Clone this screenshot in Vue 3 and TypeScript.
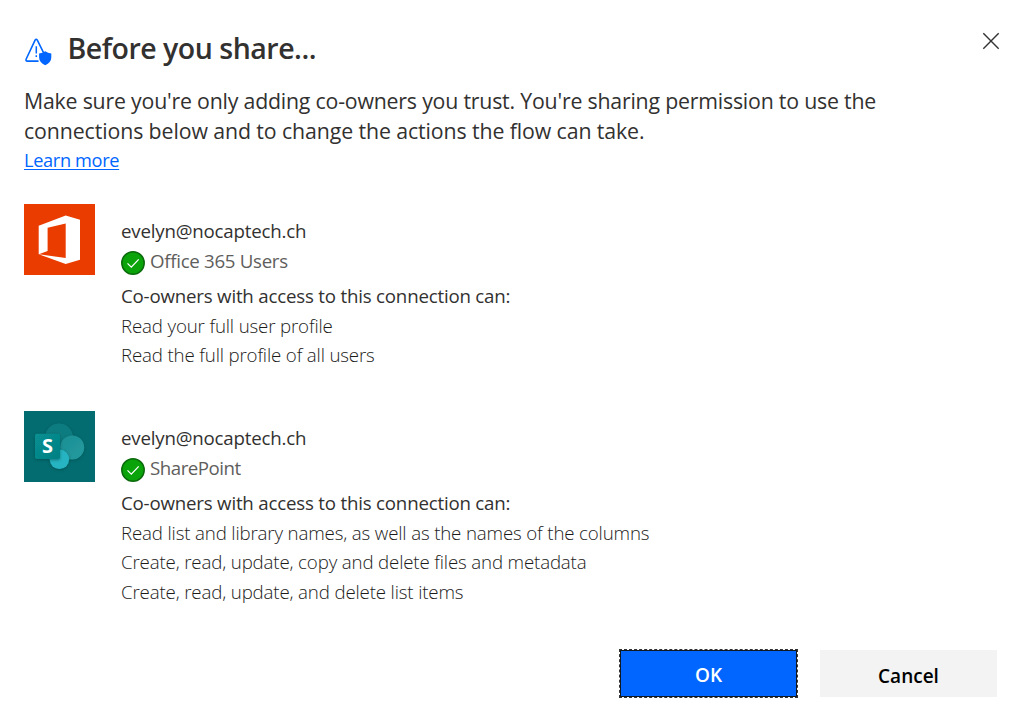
<script setup lang="ts">
interface Connection {
  id: 'office' | 'sharepoint'
  account: string
  name: string
  permissions: string[]
}

const connections: Connection[] = [
  {
    id: 'office',
    account: 'evelyn@nocaptech.ch',
    name: 'Office 365 Users',
    permissions: ['Read your full user profile', 'Read the full profile of all users'],
  },
  {
    id: 'sharepoint',
    account: 'evelyn@nocaptech.ch',
    name: 'SharePoint',
    permissions: [
      'Read list and library names, as well as the names of the columns',
      'Create, read, update, copy and delete files and metadata',
      'Create, read, update, and delete list items',
    ],
  },
]
</script>

<template>
  <div class="dialog" role="dialog" aria-label="Before you share...">
    <header class="head">
      <svg class="warn" width="28" height="30" viewBox="0 0 28 30">
        <path d="M2.2 23 11.2 4Q12.2 2.4 13.2 4L20 17.6M2.2 23Q1.4 25.1 3.4 25.1H14.5" fill="none" stroke="#0066ff" stroke-width="1.6" />
        <path d="M12.3 10.2v7.4M12.3 19.3v1.8" fill="none" stroke="#0066ff" stroke-width="1.5" />
        <path d="M21.2 15.2Q23.8 17.3 27.3 17.4V21.6Q27.2 26.6 21.2 29.2Q15.2 26.6 15.1 21.6V17.4Q18.6 17.3 21.2 15.2Z" fill="#0066ff" />
      </svg>
      <h1>Before you share...</h1>
      <button class="close" type="button" aria-label="Close">
        <svg width="18" height="18" viewBox="0 0 18 18"><path d="M1.3 1.3 16.7 16.7M16.7 1.3 1.3 16.7" stroke="#333" stroke-width="1.4" /></svg>
      </button>
    </header>

    <p class="intro">
      <span class="lead">Make sure you're only adding co-owners you trust. You're sharing permission to use the</span><br />
      <span>connections below and to change the actions the flow can take.</span>
    </p>
    <a class="learn">Learn more</a>

    <section v-for="c in connections" :key="c.id" class="connection">
      <svg v-if="c.id === 'office'" class="logo" width="71" height="71" viewBox="0 0 71 71">
        <rect width="71" height="71" fill="#eb3c00" />
        <path fill="#fff" fill-rule="evenodd" d="M14.7 21.7 41.7 11.6 56 15.7V55.7L41.7 60 14.7 50.2ZM23.6 23.8V46.9L14.9 50.2 41.7 53.9V19.6Z" />
      </svg>
      <svg v-else class="logo" width="71" height="71" viewBox="0 0 71 71">
        <defs>
          <linearGradient id="tile" x1="0" y1="0" x2="1" y2="1">
            <stop offset="0" stop-color="#078f92" /><stop offset="1" stop-color="#058083" />
          </linearGradient>
          <linearGradient id="mid" x1="0" y1="0" x2="1" y2="1">
            <stop offset="0" stop-color="#1c8e93" /><stop offset="1" stop-color="#239ba0" />
          </linearGradient>
          <filter id="shade" x="-30%" y="-30%" width="160%" height="160%">
            <feDropShadow dx="0" dy="1" stdDeviation="1.5" flood-color="#003c3f" flood-opacity=".55" />
          </filter>
        </defs>
        <rect width="71" height="71" fill="#036c70" />
        <circle cx="35" cy="26.6" r="14" fill="#117b80" filter="url(#shade)" />
        <circle cx="48.2" cy="36.5" r="12" fill="url(#mid)" filter="url(#shade)" />
        <circle cx="35.4" cy="48.3" r="9.7" fill="#27b4c2" filter="url(#shade)" />
        <rect x="11" y="22.8" width="25" height="25.2" rx="1.8" fill="url(#tile)" filter="url(#shade)" />
        <text x="23.4" y="42" text-anchor="middle" class="letter">S</text>
      </svg>
      <div class="details">
        <div class="account">{{ c.account }}</div>
        <div class="service">
          <svg width="24" height="24" viewBox="0 0 24 24">
            <circle cx="12" cy="12" r="11.2" fill="#0aa30a" stroke="#0b6a0b" stroke-width="1.5" />
            <path d="M6.5 12.4 10.3 16.1 17.7 8.4" fill="none" stroke="#fff" stroke-width="1.3" />
          </svg>
          <span :class="['name', c.id]">{{ c.name }}</span>
        </div>
        <div class="caption">Co-owners with access to this connection can:</div>
        <ul>
          <li v-for="p in c.permissions" :key="p">{{ p }}</li>
        </ul>
      </div>
    </section>

    <footer class="actions">
      <button class="btn primary" type="button">OK</button>
      <button class="btn" type="button">Cancel</button>
    </footer>
  </div>
</template>

<style>
body {
  background: #fff;
}
</style>

<style scoped>
.dialog {
  box-sizing: border-box;
  width: 1024px;
  height: 723px;
  padding: 30px 27px 26px 24px;
  display: flex;
  flex-direction: column;
  font-family: "Open Sans", "Noto Sans", sans-serif;
  color: #323130;
  overflow: hidden;
}
.head {
  display: flex;
  align-items: flex-start;
  height: 56px;
}
.warn {
  margin-top: 6px;
}
h1 {
  margin: -1px auto 0 15.5px;
  font-size: 28.5px;
  line-height: 38px;
  font-weight: 600;
  letter-spacing: -0.49px;
}
.close {
  border: 0;
  padding: 0;
  margin: 2px -2.5px 0 0;
  background: none;
  line-height: 0;
}
.intro {
  margin: 0 0 1px;
  font-size: 21.3px;
  line-height: 29.6px;
  letter-spacing: -0.1px;
  white-space: nowrap;
}
.lead {
  letter-spacing: -0.2px;
}
.learn {
  align-self: flex-start;
  font-size: 18.2px;
  line-height: 29px;
  letter-spacing: -0.34px;
  color: #0066ff;
  text-decoration: underline;
  text-decoration-thickness: 1px;
  text-underline-offset: 2px;
}
.connection {
  display: flex;
  margin-top: 29px;
  height: 178px;
}
.logo {
  flex: none;
}
.letter {
  font: 700 20px "Open Sans", sans-serif;
  fill: #fff;
}
.details {
  margin: 12px 0 0 26px;
  font-size: 18.7px;
  line-height: 29.6px;
  letter-spacing: -0.2px;
  white-space: nowrap;
}
.service {
  display: flex;
  align-items: center;
  gap: 5px;
  height: 30px;
  color: #605e5c;
}
.service svg {
  margin-top: 4px;
}
.office {
  letter-spacing: -0.3px;
}
.sharepoint {
  letter-spacing: -0.48px;
}
.caption {
  margin-top: 5px;
}
ul {
  list-style: none;
  margin: 0;
  padding: 0.4px 0 0;
  font-weight: 300;
  letter-spacing: -0.15px;
  color: #1c1b1a;
}
.actions {
  display: flex;
  justify-content: flex-end;
  gap: 23px;
  margin-top: auto;
}
.btn {
  box-sizing: border-box;
  width: 177px;
  height: 47px;
  padding: 5px 0 0;
  border: 0;
  background: #f3f3f3;
  color: #000;
  font-family: inherit;
  font-size: 19px;
  font-weight: 600;
}
.primary {
  padding-top: 3px;
  border: 1px solid #101820;
  outline: 1px dashed #333;
  background: #06f;
  color: #fff;
}
</style>
